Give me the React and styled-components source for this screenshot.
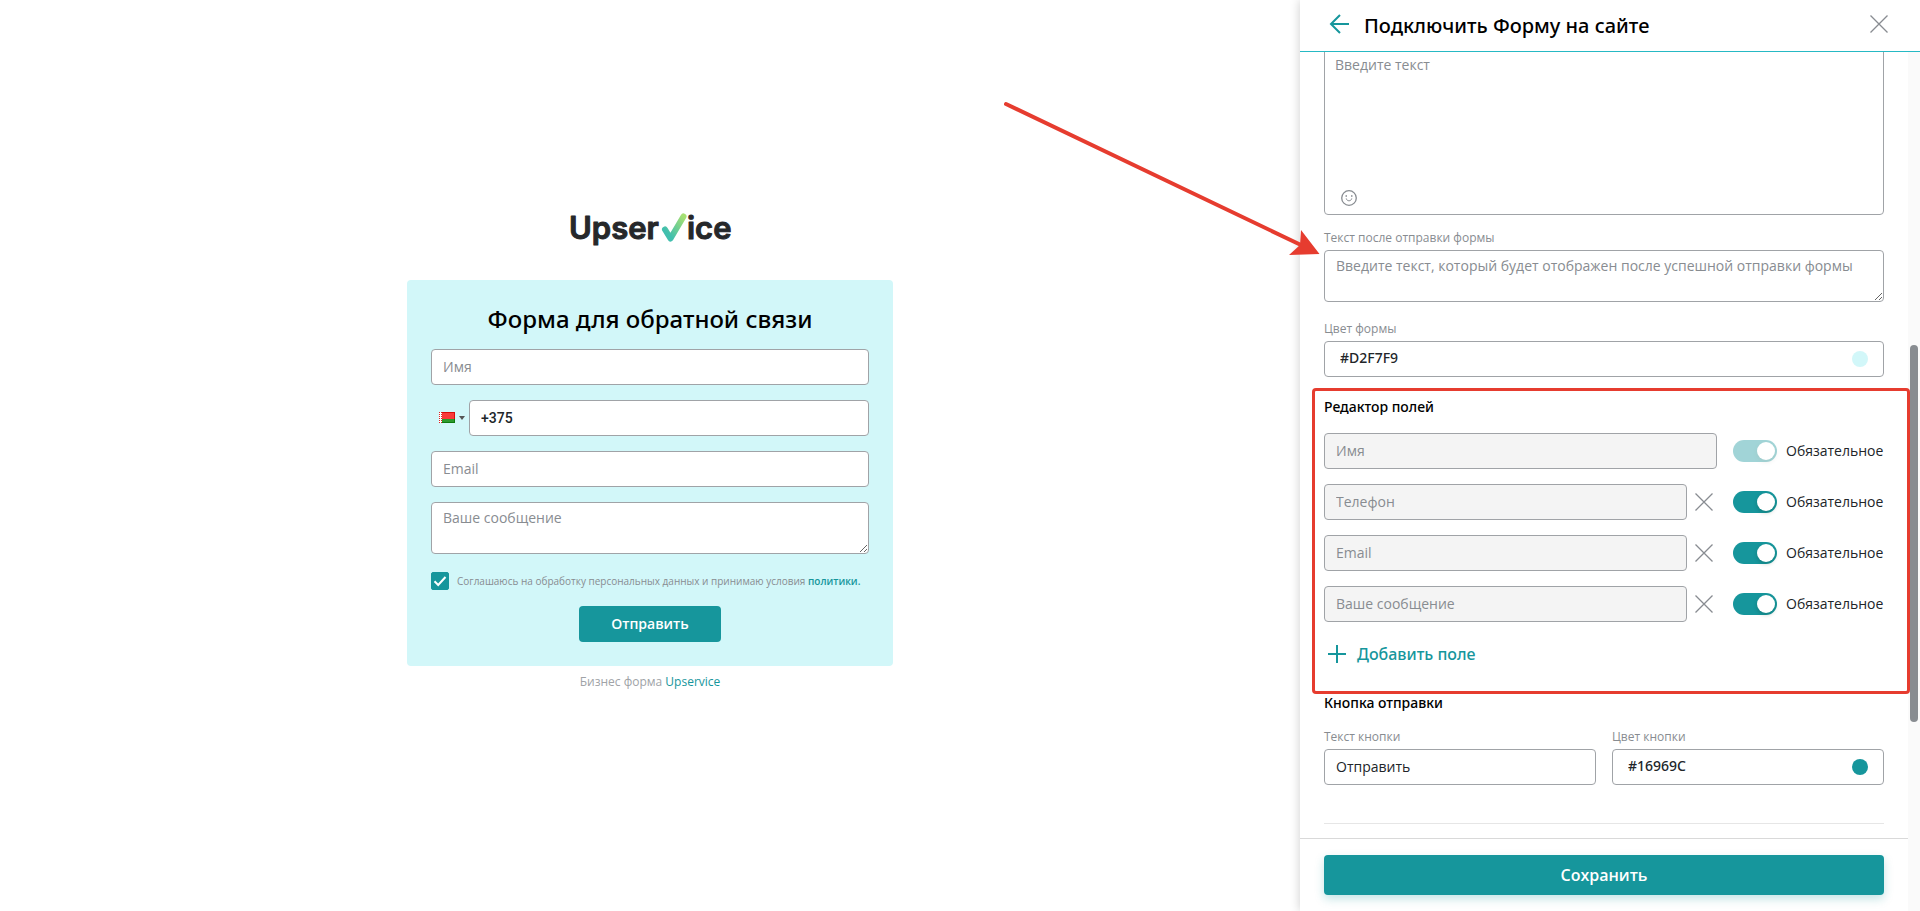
import React, { useState } from "react";
import styled, { createGlobalStyle } from "styled-components";

const startFields = [
  { id: "name", label: "Имя", required: true, locked: true },
  { id: "phone", label: "Телефон", required: true },
  { id: "email", label: "Email", required: true },
  { id: "message", label: "Ваше сообщение", required: true },
];

function Logo() {
  return (
    <LogoSvg viewBox="0 0 162 36" role="img" aria-label="Upservice">
      <defs>
        <linearGradient id="tick" x1="0" y1="1" x2="1" y2="0">
          <stop offset="0.2" stopColor="#41bfae" />
          <stop offset="1" stopColor="#a6e072" />
        </linearGradient>
      </defs>
      <LogoText x="0" y="27">Upser</LogoText>
      <path
        d="M96 17.500 L101.500 26.500 L114.500 4.500"
        fill="none"
        stroke="url(#tick)"
        strokeWidth="6"
        strokeLinecap="round"
        strokeLinejoin="round"
      />
      <LogoText x="118" y="27">ice</LogoText>
    </LogoSvg>
  );
}

function Flag() {
  return (
    <svg width="16" height="11" viewBox="0 0 16 11">
      <rect width="16" height="11" fill="#d80c0c" />
      <rect x="3" y="1" width="12" height="6" fill="#f93a3a" />
      <rect x="3" y="7" width="13" height="4" fill="#0e7a0e" />
      <rect x="3" y="7" width="12" height="3" fill="#2c9a2c" />
      <rect width="3" height="11" fill="#fff" />
      <path d="M.5 0V11M2.500 0V11" stroke="#d22" strokeDasharray="1 1" />
    </svg>
  );
}

function Cross() {
  return (
    <svg width="18" height="18" viewBox="0 0 18 18">
      <path d="M.5 .5L17.500 17.500M17.500 .5L.5 17.500" stroke="#888c91" strokeWidth="1.300" />
    </svg>
  );
}

function Smile() {
  return (
    <svg width="16" height="16" viewBox="0 0 16 16" fill="none" stroke="#888c91">
      <circle cx="8" cy="8" r="7.300" strokeWidth="1.300" />
      <path d="M5.300 8.800C5.800 11.600 10.200 11.600 10.700 8.800" strokeLinecap="round" />
      <path d="M4.500 6h1.500M10 6h1.500" strokeWidth="1.300" />
    </svg>
  );
}

function ColorField({ id, value, onChange }) {
  return (
    <ColorBox>
      <ColorInput id={id} value={value} onChange={(e) => onChange(e.target.value)} />
      <Swatch type="button" aria-label="Выбрать цвет" color={value} />
    </ColorBox>
  );
}

function App() {
  const [fields, setFields] = useState(startFields);
  const [formColor, setFormColor] = useState("#D2F7F9");
  const [buttonColor, setButtonColor] = useState("#16969C");
  const [buttonText, setButtonText] = useState("Отправить");
  const [agree, setAgree] = useState(true);

  const toggle = (id) =>
    setFields(fields.map((f) => (f.id === id ? { ...f, required: !f.required } : f)));

  return (
    <Page>
      <GlobalStyle />
      <Preview>
        <Logo />
        <Card color={formColor} onSubmit={(e) => e.preventDefault()}>
          <CardTitle>Форма для обратной связи</CardTitle>
          <Stack>
            <Input placeholder="Имя" aria-label="Имя" />
            <PhoneRow>
              <Country type="button" aria-label="Страна" aria-haspopup="listbox">
                <Flag />
                <Caret />
              </Country>
              <PhoneInput defaultValue="+375" aria-label="Телефон" />
            </PhoneRow>
            <Input placeholder="Email" aria-label="Email" />
            <TextArea placeholder="Ваше сообщение" aria-label="Ваше сообщение" />
          </Stack>
          <Agree>
            <CheckWrap>
              <Check
                id="agree"
                type="checkbox"
                checked={agree}
                onChange={() => setAgree(!agree)}
              />
              {agree && (
                <CheckMark viewBox="0 0 18 18">
                  <path d="M3.500 9.300L7.200 13L14.500 5" fill="none" stroke="#fff" strokeWidth="2" />
                </CheckMark>
              )}
            </CheckWrap>
            <AgreeText htmlFor="agree">
              Соглашаюсь на обработку персональных данных и принимаю условия{" "}
              <PolicyLink href="#policy">политики.</PolicyLink>
            </AgreeText>
          </Agree>
          <SendButton color={buttonColor}>{buttonText}</SendButton>
        </Card>
        <Credit>
          Бизнес форма <CreditLink href="#upservice">Upservice</CreditLink>
        </Credit>
      </Preview>

      <Panel>
        <Header>
          <IconButton type="button" aria-label="Назад">
            <svg width="20" height="20" viewBox="0 0 20 20" fill="none" stroke="#16969c" strokeWidth="2">
              <path d="M11 1L2 10L11 19M2 10H20" />
            </svg>
          </IconButton>
          <Title>Подключить Форму на сайте</Title>
          <IconButton type="button" aria-label="Закрыть">
            <Cross />
          </IconButton>
        </Header>
        <PanelMain>
          <Column>
            <Scroll>
              <Editor>
                <EditorText placeholder="Введите текст" aria-label="Текст" />
                <EmojiButton type="button" aria-label="Эмодзи">
                  <Smile />
                </EmojiButton>
              </Editor>

              <Field>
                <Label htmlFor="after">Текст после отправки формы</Label>
                <TextArea
                  id="after"
                  placeholder="Введите текст, который будет отображен после успешной отправки формы"
                />
              </Field>
              <Field>
                <Label htmlFor="form-color">Цвет формы</Label>
                <ColorField id="form-color" value={formColor} onChange={setFormColor} />
              </Field>

              <FieldEditor>
                <SectionTitle>Редактор полей</SectionTitle>
                <Stack>
                  {fields.map((field) => (
                    <FieldRow key={field.id}>
                      <Input placeholder={field.label} aria-label={field.label} disabled />
                      {!field.locked && (
                        <RemoveButton
                          type="button"
                          aria-label="Удалить поле"
                          onClick={() => setFields(fields.filter((f) => f.id !== field.id))}
                        >
                          <Cross />
                        </RemoveButton>
                      )}
                      <SwitchLabel>
                        <Switch
                          type="checkbox"
                          checked={field.required}
                          disabled={field.locked}
                          onChange={() => toggle(field.id)}
                        />
                        Обязательное
                      </SwitchLabel>
                    </FieldRow>
                  ))}
                </Stack>
                <AddButton type="button">
                  <svg width="18" height="18" viewBox="0 0 18 18" stroke="#16969c" strokeWidth="2">
                    <path d="M9 0V18M0 9H18" />
                  </svg>
                  Добавить поле
                </AddButton>
                <Highlight />
              </FieldEditor>

              <SectionTitle>Кнопка отправки</SectionTitle>
              <TwoColumns>
                <div>
                  <Label htmlFor="button-text">Текст кнопки</Label>
                  <Input
                    id="button-text"
                    value={buttonText}
                    onChange={(e) => setButtonText(e.target.value)}
                  />
                </div>
                <div>
                  <Label htmlFor="button-color">Цвет кнопки</Label>
                  <ColorField id="button-color" value={buttonColor} onChange={setButtonColor} />
                </div>
              </TwoColumns>
              <Divider />
            </Scroll>
            <Footer>
              <SaveButton type="button">Сохранить</SaveButton>
            </Footer>
          </Column>
          <Track>
            <Thumb />
          </Track>
        </PanelMain>
        <Arrow viewBox="0 0 320 160">
          <path d="M6 4L301 145" stroke="#e63c2f" strokeWidth="4" strokeLinecap="round" />
          <path d="M319.500 154L301 130L300 145L289 155Z" fill="#e63c2f" />
        </Arrow>
      </Panel>
    </Page>
  );
}

// Open Sans has no medium weight installed, Noto Sans does
const mediumFont = `"Noto Sans", "Open Sans", sans-serif`;

const GlobalStyle = createGlobalStyle`
  * {
    box-sizing: border-box;
  }
  body {
    margin: 0;
    background: #fff;
    color: #212529;
    font-family: "Open Sans", "Noto Sans", sans-serif;
    font-size: 14px;
    line-height: 20px;
  }
  button, input, textarea {
    font: inherit;
    color: inherit;
  }
  button {
    border: 0;
    padding: 0;
    background: none;
    cursor: pointer;
  }
`;

const Page = styled.div`
  display: flex;
  height: 100vh;
  overflow: hidden;
`;

const Preview = styled.main`
  flex: 1;
  display: flex;
  flex-direction: column;
  align-items: center;
  justify-content: center;
`;

const LogoSvg = styled.svg`
  width: 162px;
  height: 36px;
  margin-bottom: 32px;
  overflow: visible;
`;

const LogoText = styled.text`
  font-family: Inter, sans-serif;
  font-size: 31px;
  font-weight: 600;
  fill: #26282a;
  stroke: #26282a;
  stroke-width: 1px;
  stroke-linejoin: round;
`;

const Card = styled.form`
  display: flex;
  flex-direction: column;
  width: 486px;
  padding: 24px;
  border-radius: 4px;
  background: ${(props) => props.color};
`;

const CardTitle = styled.h1`
  margin: 0 0 15px;
  color: #000;
  font-family: ${mediumFont};
  font-size: 24px;
  font-weight: 500;
  line-height: 30px;
  text-align: center;
`;

const Stack = styled.div`
  display: flex;
  flex-direction: column;
  gap: 15px;
`;

const Input = styled.input`
  flex: 1;
  width: 100%;
  min-width: 0;
  min-height: 36px;
  padding: 0 11px;
  border: 1px solid #a0a3a7;
  border-radius: 4px;
  background: #fff;
  outline: none;

  &::placeholder {
    color: #888c91;
  }
  &:disabled {
    background: #f4f4f4;
  }
`;

const PhoneInput = styled(Input)`
  font-family: Roboto, sans-serif;
  font-weight: 500;
`;

const TextArea = styled.textarea`
  display: block;
  width: 100%;
  height: 52px;
  padding: 5px 11px;
  border: 1px solid #a0a3a7;
  border-radius: 4px;
  background: #fff;
  outline: none;
  resize: vertical;

  &::placeholder {
    color: #888c91;
  }
`;

const PhoneRow = styled.div`
  display: flex;
`;

const Country = styled.button`
  display: flex;
  align-items: center;
  justify-content: center;
  gap: 4px;
  width: 38px;
  padding-left: 4px;
`;

const Caret = styled.span`
  border-top: 4px solid #555;
  border-left: 3px solid transparent;
  border-right: 3px solid transparent;
`;

const Agree = styled.div`
  display: flex;
  align-items: center;
  gap: 8px;
  margin: 18px 0 16px;
`;

const CheckWrap = styled.span`
  display: grid;
  width: 18px;
  height: 18px;

  > * {
    grid-area: 1 / 1;
  }
`;

const Check = styled.input`
  appearance: none;
  width: 18px;
  height: 18px;
  margin: 0;
  border: 1px solid #16969c;
  border-radius: 2px;
  background: #fff;

  &:checked {
    background: #16969c;
  }
`;

const CheckMark = styled.svg`
  pointer-events: none;
`;

const AgreeText = styled.label`
  color: #888c91;
  font-size: 10px;
  line-height: 16px;
  white-space: nowrap;
`;

const PolicyLink = styled.a`
  color: #16969c;
  font-weight: 600;
  text-decoration: none;
`;

const SendButton = styled.button`
  align-self: center;
  min-width: 142px;
  height: 36px;
  border-radius: 4px;
  background: ${(props) => props.color};
  color: #fff;
  font-weight: 600;
`;

const Credit = styled.p`
  margin: 8px 0 10px;
  color: #a0a3a7;
  font-size: 12px;
  line-height: 16px;
`;

const CreditLink = styled.a`
  color: #16969c;
  text-decoration: none;
`;

const Panel = styled.aside`
  position: relative;
  display: flex;
  flex-direction: column;
  width: 620px;
  background: #fff;
  box-shadow: 0 0 10px rgba(0, 0, 0, 0.2);
`;

const Header = styled.header`
  display: flex;
  align-items: center;
  gap: 15px;
  height: 52px;
  padding: 0 32px 4px 29px;
  border-bottom: 1px solid #26b9c4;
`;

const Title = styled.h2`
  flex: 1;
  margin: 0;
  padding-top: 4px;
  color: #000;
  font-family: ${mediumFont};
  font-size: 20px;
  font-weight: 500;
  line-height: 28px;
`;

const IconButton = styled.button`
  display: flex;
`;

const PanelMain = styled.div`
  flex: 1;
  display: flex;
  min-height: 0;
`;

const Column = styled.div`
  flex: 1;
  display: flex;
  flex-direction: column;
  min-width: 0;
`;

const Scroll = styled.div`
  flex: 1;
  min-height: 0;
  padding: 0 24px;
  overflow-x: visible;
  overflow-y: clip;
`;

const Editor = styled.div`
  display: flex;
  flex-direction: column;
  align-items: flex-start;
  height: 171px;
  margin: -8px 0 15px;
  padding: 10px 10px 8px;
  border: 1px solid #a0a3a7;
  border-radius: 4px;
`;

const EditorText = styled.textarea`
  flex: 1;
  width: 100%;
  padding: 0;
  border: 0;
  outline: none;
  resize: none;

  &::placeholder {
    color: #888c91;
  }
`;

const EmojiButton = styled.button`
  display: flex;
  padding: 0 6px;
`;

const Field = styled.div`
  margin-bottom: 19px;
`;

const Label = styled.label`
  display: block;
  margin-bottom: 4px;
  color: #888c91;
  font-size: 12px;
  line-height: 16px;
`;

const ColorBox = styled.div`
  display: flex;
  align-items: center;
  height: 36px;
  padding: 0 15px;
  border: 1px solid #a0a3a7;
  border-radius: 4px;
  background: #fff;
`;

const ColorInput = styled.input`
  flex: 1;
  min-width: 0;
  padding: 0 0 2px;
  border: 0;
  outline: none;
  background: none;
  font-family: ${mediumFont};
  font-weight: 500;
`;

const Swatch = styled.button`
  width: 16px;
  height: 16px;
  border-radius: 50%;
  background: ${(props) => props.color};
`;

const FieldEditor = styled.section`
  position: relative;
  margin: 20px 0 27px;
`;

const SectionTitle = styled.h3`
  margin: 0 0 16px;
  color: #000;
  font-family: ${mediumFont};
  font-size: 14px;
  font-weight: 500;
  line-height: 20px;
`;

const FieldRow = styled.div`
  display: flex;
  align-items: center;
`;

const RemoveButton = styled.button`
  display: flex;
  margin: 0 4px 0 8px;
`;

const SwitchLabel = styled.label`
  display: flex;
  align-items: center;
  gap: 9px;
  min-width: 151px;
  margin-left: 16px;
`;

const Switch = styled.input`
  appearance: none;
  display: flex;
  width: 44px;
  height: 22px;
  margin: 0;
  padding: 2px;
  border-radius: 11px;
  background: ${(props) => (props.checked ? "#16969c" : "#c4c6c8")};
  justify-content: ${(props) => (props.checked ? "flex-end" : "flex-start")};

  &::before {
    content: "";
    width: 18px;
    height: 18px;
    border-radius: 50%;
    background: #fff;
    box-shadow: 0 2px 4px rgba(0, 35, 11, 0.2);
  }
  &:disabled {
    opacity: 0.4;
  }
`;

const AddButton = styled.button`
  display: flex;
  align-items: center;
  gap: 11px;
  margin-top: 20px;
  padding: 0 4px;
  color: #16969c;
  font-family: ${mediumFont};
  font-size: 16px;
  font-weight: 500;
  line-height: 24px;
`;

// red frame drawn over the section, reaches to the scrollbar
const Highlight = styled.div`
  position: absolute;
  z-index: 1;
  top: -9px;
  right: -26px;
  bottom: -28px;
  left: -12px;
  border: 3px solid #e63c2f;
  border-radius: 4px;
  pointer-events: none;
`;

const TwoColumns = styled.div`
  display: grid;
  grid-template-columns: 1fr 1fr;
  gap: 16px;
`;

const Divider = styled.hr`
  margin: 38px 0 0;
  border: 0;
  border-top: 1px solid #e6e6e6;
`;

const Footer = styled.footer`
  padding: 16px 24px;
  border-top: 1px solid #d9d9d9;
`;

const SaveButton = styled.button`
  display: block;
  width: 100%;
  height: 40px;
  border-radius: 4px;
  background: #16969c;
  box-shadow: 0 4px 10px rgba(22, 150, 156, 0.25);
  color: #fff;
  font-size: 16px;
  font-weight: 600;
`;

const Track = styled.div`
  width: 12px;
  padding: 0 2px;
  background: #fafafa;
`;

const Thumb = styled.div`
  height: 377px;
  margin-top: 293px;
  border-radius: 4px;
  background: #888c91;
`;

const Arrow = styled.svg`
  position: absolute;
  top: 100px;
  left: -300px;
  width: 320px;
  height: 160px;
  pointer-events: none;
`;

export default App;
